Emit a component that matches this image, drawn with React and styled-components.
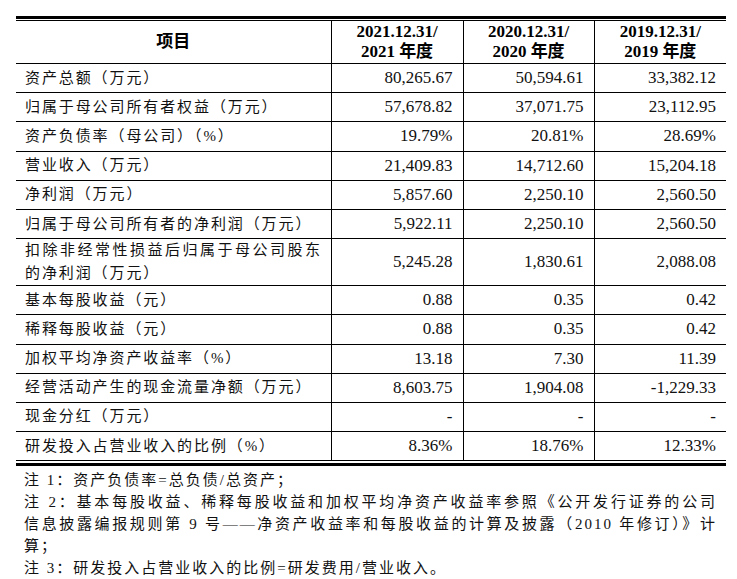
import React from 'react'
import styled, { createGlobalStyle } from 'styled-components'

const GlobalStyle = createGlobalStyle`
  html, body {
    margin: 0;
    padding: 0;
    background: #ffffff;
  }
  body {
    font-family: "Liberation Serif", "Noto Sans CJK SC", serif;
    color: #000;
  }
`

const rows = [
  { label: '资产总额（万元）', values: ['80,265.67', '50,594.61', '33,382.12'] },
  { label: '归属于母公司所有者权益（万元）', values: ['57,678.82', '37,071.75', '23,112.95'] },
  { label: '资产负债率（母公司）（%）', values: ['19.79%', '20.81%', '28.69%'] },
  { label: '营业收入（万元）', values: ['21,409.83', '14,712.60', '15,204.18'] },
  { label: '净利润（万元）', values: ['5,857.60', '2,250.10', '2,560.50'] },
  { label: '归属于母公司所有者的净利润（万元）', values: ['5,922.11', '2,250.10', '2,560.50'] },
  { label: ['扣除非经常性损益后归属于母公司股东', '的净利润（万元）'], values: ['5,245.28', '1,830.61', '2,088.08'], tall: true },
  { label: '基本每股收益（元）', values: ['0.88', '0.35', '0.42'] },
  { label: '稀释每股收益（元）', values: ['0.88', '0.35', '0.42'] },
  { label: '加权平均净资产收益率（%）', values: ['13.18', '7.30', '11.39'] },
  { label: '经营活动产生的现金流量净额（万元）', values: ['8,603.75', '1,904.08', '-1,229.33'] },
  { label: '现金分红（万元）', values: ['-', '-', '-'] },
  { label: '研发投入占营业收入的比例（%）', values: ['8.36%', '18.76%', '12.33%'] },
]

const years = ['2021', '2020', '2019']

function App() {
  return (
    <Page>
      <GlobalStyle />
      <TableFrame>
        <Table>
          <colgroup>
            <col style={{ width: 315 }} />
            <col style={{ width: 132 }} />
            <col style={{ width: 131 }} />
            <col style={{ width: 132 }} />
          </colgroup>
          <thead>
            <tr>
              <HeadCell>项目</HeadCell>
              {years.map((y) => (
                <HeadCell key={y} divided>
                  <HeadLine>{y}.12.31/</HeadLine>
                  <HeadLine>{y} 年度</HeadLine>
                </HeadCell>
              ))}
            </tr>
          </thead>
          <tbody>
            {rows.map((r, i) => (
              <Row key={i} tall={r.tall} last={i === rows.length - 1}>
                <LabelCell>
                  {Array.isArray(r.label) ? (
                    <>
                      <JustifyLine>{r.label[0]}</JustifyLine>
                      <span>{r.label[1]}</span>
                    </>
                  ) : (
                    r.label
                  )}
                </LabelCell>
                {r.values.map((v, j) => (
                  <NumCell key={j}>{v}</NumCell>
                ))}
              </Row>
            ))}
          </tbody>
        </Table>
      </TableFrame>
      <Notes>
        <NoteLine>注 1：资产负债率=总负债/总资产；</NoteLine>
        <NoteLine justify>注 2：基本每股收益、稀释每股收益和加权平均净资产收益率参照《公开发行证券的公司</NoteLine>
        <NoteLine justify>信息披露编报规则第 9 号——净资产收益率和每股收益的计算及披露（2010 年修订）》计</NoteLine>
        <NoteLine>算；</NoteLine>
        <NoteLine>注 3：研发投入占营业收入的比例=研发费用/营业收入。</NoteLine>
      </Notes>
    </Page>
  )
}

const Page = styled.div`
  width: 737px;
  height: 579px;
  padding: 16px 0 0 16px;
  box-sizing: border-box;
  overflow: hidden;
`

const TableFrame = styled.div`
  width: 710px;
  border-top: 3px solid #000;
  border-bottom: 3px solid #000;
  padding: 1px 0 2px 0;
`

const Table = styled.table`
  width: 710px;
  table-layout: fixed;
  border-collapse: collapse;
  border-top: 1px solid #000;
  border-bottom: 1px solid #000;
`

const HeadCell = styled.th`
  height: 42px;
  padding: 0;
  border-bottom: 1px solid #000;
  border-left: ${(p) => (p.divided ? '1px solid #000' : 'none')};
  font-family: "Liberation Serif", "Noto Sans CJK SC", serif;
  font-weight: 700;
  font-size: 17px;
  line-height: 20px;
  text-align: center;
  vertical-align: middle;
  color: #000;
`

const HeadLine = styled.div`
  white-space: nowrap;
`

const Row = styled.tr`
  height: ${(p) => (p.tall ? '46px' : '29.2px')};

  td {
    border-bottom: ${(p) => (p.last ? 'none' : '1px solid #000')};
  }
`

const LabelCell = styled.td`
  padding: 0 4px 0 9px;
  font-family: "Liberation Serif", "Noto Sans CJK SC", serif;
  font-size: 15px;
  letter-spacing: 1.9px;
  line-height: 23px;
  color: #111;
  vertical-align: middle;
  white-space: nowrap;
`

const JustifyLine = styled.span`
  display: block;
  text-align: justify;
  text-align-last: justify;
  width: 297px;
`

const NumCell = styled.td`
  padding: 0 10px 0 0;
  border-left: 1px solid #000;
  font-family: "Liberation Serif", serif;
  font-size: 17px;
  line-height: 20px;
  text-align: right;
  vertical-align: middle;
  color: #111;
  white-space: nowrap;
`

const Notes = styled.div`
  width: 693px;
  margin: 3px 0 0 8px;
  font-family: "Liberation Serif", "Noto Sans CJK SC", serif;
  font-size: 15px;
  line-height: 22px;
  color: #111;
`

const NoteLine = styled.div`
  white-space: nowrap;
  letter-spacing: 2px;
  text-align: ${(p) => (p.justify ? 'justify' : 'left')};
  text-align-last: ${(p) => (p.justify ? 'justify' : 'auto')};
`

export default App
